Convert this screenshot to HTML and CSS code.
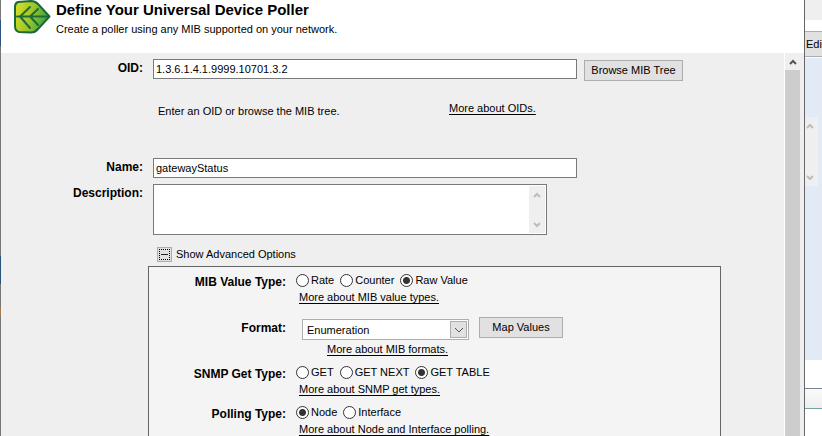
FILE: index.html
```html
<!DOCTYPE html>
<html lang="en">
<head>
<meta charset="utf-8">
<title>Define Your Universal Device Poller</title>
<link rel="stylesheet" href="styles.css">
</head>
<body>
<div class="desktop">
  <div class="edge"></div>
  <main class="dialog">
    <header class="header">
      <svg class="logo" viewBox="0 0 38 36" aria-hidden="true">
        <defs><linearGradient id="leaf" x1="0" x2="1" y1="0.2" y2="0.5"><stop offset="0" stop-color="#d8e022"/><stop offset="0.5" stop-color="#9cc62c"/><stop offset="1" stop-color="#2f9e45"/></linearGradient></defs>
        <path d="M5 2 L18 1 Q22 1 25 4 L36.500 16.500 L25 29 Q22 32.500 18 32.500 L6 32 Q2 31 2 26 L2 7 Q2 3 5 2Z" fill="url(#leaf)" stroke="#1d6935" stroke-width="2" stroke-linejoin="round"/>
        <path d="M4 16.500 H35 M7 16.500 L17 7 M7 16.500 L17 28 M17 16.500 L25 9 M17 16.500 L25 25" fill="none" stroke="#1f6b35" stroke-width="2" stroke-linecap="round"/>
      </svg>
      <div>
        <h1 class="title">Define Your Universal Device Poller</h1>
        <p class="subtitle">Create a poller using any MIB supported on your network.</p>
      </div>
    </header>
    <div class="body">
      <form class="form">
        <div class="row">
          <label class="label" for="oid">OID:</label>
          <div class="field">
            <input class="text" id="oid" type="text" value="1.3.6.1.4.1.9999.10701.3.2">
            <button class="button browse" type="button">Browse MIB Tree</button>
          </div>
        </div>
        <div class="hint">
          <span class="hint-text">Enter an OID or browse the MIB tree.</span>
          <a class="link" href="#oids">More about OIDs.</a>
        </div>
        <div class="row name-row">
          <label class="label" for="name">Name:</label>
          <div class="field"><input class="text" id="name" type="text" value="gatewayStatus"></div>
        </div>
        <div class="row">
          <label class="label" for="description">Description:</label>
          <div class="memo">
            <textarea class="memo-text" id="description"></textarea>
            <div class="mini-scroll">
              <svg class="arrow" viewBox="0 0 8 6"><path d="M1 5 L4 2 L7 5"/></svg>
              <svg class="arrow" viewBox="0 0 8 6"><path d="M1 1 L4 4 L7 1"/></svg>
            </div>
          </div>
        </div>
        <div class="toggle-row">
          <button class="toggle" id="toggle" type="button" aria-label="Collapse"><span class="minus"></span></button>
          <label for="toggle">Show Advanced Options</label>
        </div>
        <div class="panel">
          <div class="option">
            <span class="label" id="value-type">MIB Value Type:</span>
            <div>
              <div class="radios" role="radiogroup" aria-labelledby="value-type">
                <label class="choice"><input class="radio" type="radio" name="value">Rate</label>
                <label class="choice"><input class="radio" type="radio" name="value">Counter</label>
                <label class="choice"><input class="radio" type="radio" name="value" checked>Raw Value</label>
              </div>
              <a class="link" href="#value-types">More about MIB value types.</a>
            </div>
          </div>
          <div class="option format">
            <label class="label" for="format">Format:</label>
            <div>
              <div class="format-field">
                <div class="combo">
                  <select class="select" id="format"><option>Enumeration</option></select>
                  <span class="drop"><svg class="arrow dark" viewBox="0 0 8 6"><path d="M0 1 L4 5 L8 1"/></svg></span>
                </div>
                <button class="button map" type="button">Map Values</button>
              </div>
              <a class="link indented" href="#formats">More about MIB formats.</a>
            </div>
          </div>
          <div class="option">
            <span class="label" id="get-type">SNMP Get Type:</span>
            <div>
              <div class="radios" role="radiogroup" aria-labelledby="get-type">
                <label class="choice"><input class="radio" type="radio" name="get">GET</label>
                <label class="choice"><input class="radio" type="radio" name="get">GET NEXT</label>
                <label class="choice"><input class="radio" type="radio" name="get" checked>GET TABLE</label>
              </div>
              <a class="link" href="#get-types">More about SNMP get types.</a>
            </div>
          </div>
          <div class="option">
            <span class="label" id="polling">Polling Type:</span>
            <div>
              <div class="radios" role="radiogroup" aria-labelledby="polling">
                <label class="choice"><input class="radio" type="radio" name="poll" checked>Node</label>
                <label class="choice"><input class="radio" type="radio" name="poll">Interface</label>
              </div>
              <a class="link" href="#polling">More about Node and Interface polling.</a>
            </div>
          </div>
        </div>
      </form>
      <div class="scrollbar">
        <svg class="arrow up" viewBox="0 0 8 6"><path d="M1 5 L4 2 L7 5"/></svg>
        <div class="thumb"></div>
      </div>
    </div>
  </main>
  <aside class="behind">
    <div class="behind-top"></div>
    <button class="edit" type="button">Edi</button>
    <div class="behind-pane">
      <div class="behind-scroll">
        <svg class="arrow" viewBox="0 0 8 6"><path d="M1 5 L4 2 L7 5"/></svg>
        <svg class="arrow" viewBox="0 0 8 6"><path d="M1 1 L4 4 L7 1"/></svg>
      </div>
    </div>
    <div class="behind-bar"></div>
  </aside>
</div>
</body>
</html>
```
FILE: styles.css
```css
* { box-sizing: border-box; }
body {
  margin: 0;
  font: 11px/16px "Liberation Sans", Arial, sans-serif;
  color: #000;
  background: #fff;
}
button, input, select, textarea { font: inherit; color: inherit; margin: 0; border-radius: 0; }
.desktop { display: flex; height: 100vh; overflow: hidden; }
.edge {
  flex: 0 0 1px;
  background: linear-gradient(#777 20px, #2c5380 20px 46px, #777 46px 256px, #2c5380 256px 284px, #777 284px 308px, #a87850 308px 316px, #777 316px);
}
.dialog { flex: 1; min-width: 0; display: flex; flex-direction: column; border-right: 1px solid #646668; background: #efefef; }
.header { flex: 0 0 53px; display: flex; gap: 5px; padding-left: 12px; background: #fff; }
.logo { width: 38px; height: 36px; }
.title { margin: 2px 0 0; font-size: 15px; line-height: 16px; font-weight: bold; }
.subtitle { margin: 3px 0 0; }
.body { flex: 1; min-height: 0; display: flex; }
.form { flex: 1; min-width: 0; overflow: hidden; padding-top: 6px; }
.row { display: grid; grid-template-columns: 142px 1fr; column-gap: 10px; margin-bottom: 6px; }
.label { padding-top: 1px; font-size: 12px; font-weight: bold; text-align: right; }
.field { display: flex; gap: 7px; }
.text { width: 424px; height: 20px; padding: 0 2px; border: 1px solid #7a7a7a; background: #fff; }
.button { padding: 0; border: 1px solid #adadad; background: #e1e1e1; line-height: 19px; }
.browse { width: 99px; height: 21px; margin-top: 1px; }
.hint { display: flex; align-items: flex-start; gap: 110px; padding-left: 157px; margin-top: 19px; }
.hint-text { width: 181px; margin-top: 3px; white-space: nowrap; }
.link { display: block; width: max-content; margin-left: 3px; color: #000; text-underline-offset: 2px; }
.hint .link { margin-left: 0; }
.name-row { margin-top: 39px; }
.memo { display: flex; width: 394px; height: 51px; padding: 1px; border: 1px solid #7a7a7a; background: #fff; }
.memo-text { flex: 1; padding: 2px; border: 0; outline: 0; resize: none; overflow: hidden; background: #fff; }
.mini-scroll { width: 16px; display: flex; flex-direction: column; align-items: center; justify-content: space-between; padding: 6px 0 5px; background: #efefef; }
.arrow { display: block; width: 8px; height: 6px; fill: none; stroke: #bdbdbd; stroke-width: 2; }
.toggle-row { display: flex; align-items: center; gap: 4px; height: 16px; padding-left: 156px; margin-top: 11px; }
.toggle { width: 15px; height: 15px; padding: 1px; border: 1px solid #adadad; background: #e1e1e1; }
.minus { display: flex; align-items: center; height: 11px; border: 1px dotted #000; }
.minus::before { content: ""; flex: 1; height: 1px; margin: 0 1px; background: #222; }
.panel { width: 573px; margin: 4px 0 0 147px; padding-top: 4px; border: 1px solid #646464; background: #f4f4f4; }
.option { display: grid; grid-template-columns: 137px 1fr; column-gap: 10px; margin-bottom: 6px; }
.option .label { padding-top: 3px; }
.option.format { margin-top: 12px; }
.radios { display: flex; align-items: center; gap: 6px; height: 18px; }
.choice { display: flex; align-items: center; gap: 2px; }
.radio { appearance: none; width: 13px; height: 13px; border: 1px solid #333; border-radius: 50%; background: #fff; }
.radio:checked { background: radial-gradient(circle, #333 0 3px, #fff 4px); }
.format-field { display: flex; align-items: flex-start; gap: 10px; height: 23px; margin: 0 0 1px 6px; }
.combo { position: relative; width: 167px; height: 21px; margin-top: 2px; }
.select { appearance: none; width: 100%; height: 100%; padding: 0 22px 0 4px; border: 1px solid #adadad; background: #fff; }
.drop { position: absolute; top: 2px; right: 2px; bottom: 2px; width: 17px; display: flex; align-items: center; justify-content: center; border: 1px solid #adadad; background: #e1e1e1; pointer-events: none; }
.dark { stroke: #555; stroke-width: 1; }
.map { width: 84px; height: 21px; }
.indented { margin-left: 31px; }
.scrollbar { flex: 0 0 20px; display: flex; flex-direction: column; padding-right: 4px; border-left: 1px solid #fff; background: #efefef; }
.up { margin: 6px auto 5px 4px; stroke: #555; }
.thumb { flex: 1; background: #cdcdcd; }
.behind { flex: 0 0 17px; overflow: hidden; display: flex; flex-direction: column; background: #fff; }
.behind-top { height: 20px; margin-bottom: 11px; background: #efefef; }
.edit { flex: 0 0 26px; padding: 0 1px; border: solid #adadad; border-width: 1px 0; background: #e1e1e1; text-align: left; }
.behind-pane { height: 303px; padding-top: 59px; background: #e1eaf5; border-top: 1px solid #fff; }
.behind-scroll { display: flex; flex-direction: column; justify-content: space-between; width: 13px; height: 69px; padding: 6px 1px 5px; background: #efefef; }
.behind-bar { height: 21px; margin-top: 28px; border-top: 1px solid #7b8494; border-bottom: 1px solid #78a3a3; background: linear-gradient(#fafafa, #eee); }
```
